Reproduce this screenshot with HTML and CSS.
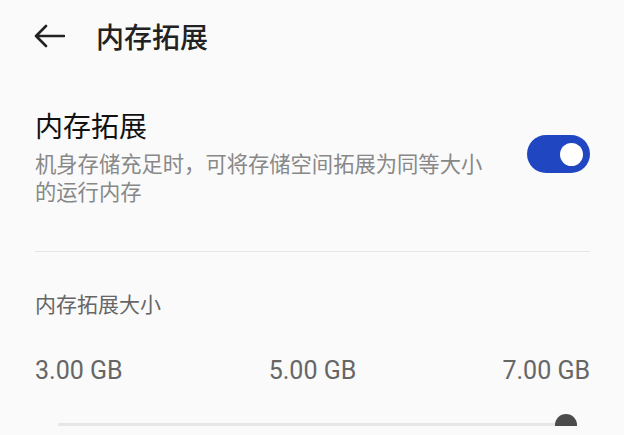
FILE: index.html
```html
<!DOCTYPE html>
<html lang="zh-CN">

<head>
    <meta charset="UTF-8">
    <meta name="viewport" content="width=device-width, initial-scale=1.0">
    <title>内存拓展</title>
    <link rel="stylesheet" href="styles.css">
</head>

<body>
    <div class="page">
        <div class="top-bar">
            <svg class="back" width="32" height="24" viewBox="0 0 32 24">
                <path d="M31 12H3M13 2L3 12l10 10" fill="none" stroke="#222" stroke-width="2.6" stroke-linecap="round" stroke-linejoin="round" />
            </svg>
            <span class="top-title">内存拓展</span>
        </div>

        <div class="switch-row">
            <div class="switch-text">
                <div class="switch-title">内存拓展</div>
                <div class="switch-desc">机身存储充足时，可将存储空间拓展为同等大小的运行内存</div>
            </div>
            <span class="toggle on"><span class="knob"></span></span>
        </div>

        <div class="divider"></div>

        <div class="size-label">内存拓展大小</div>
        <div class="size-values">
            <span>3.00 GB</span>
            <span>5.00 GB</span>
            <span>7.00 GB</span>
        </div>
        <div class="slider">
            <span class="thumb"></span>
        </div>
    </div>
</body>

</html>
```

FILE: styles.css
```css
html,
body {
    margin: 0;
    padding: 0;
    background: #fafafa;
}

body {
    font-family: Roboto, "Noto Sans CJK SC", sans-serif;
    overflow: hidden;
}

.page {
    padding: 0 34px 0 35px;
}

.top-bar {
    display: flex;
    align-items: center;
    height: 72px;
    margin-left: -2px;
}

.top-bar .back {
    display: block;
}

.top-title {
    margin-left: 31px;
    font-family: "Noto Sans CJK SC", sans-serif;
    font-size: 28px;
    font-weight: 500;
    color: #222;
}

.switch-row {
    display: flex;
    align-items: center;
    justify-content: space-between;
    padding-top: 33px;
}

.switch-text {
    width: 460px;
    font-family: "Noto Sans CJK SC", sans-serif;
}

.switch-title {
    font-size: 28px;
    line-height: 40px;
    color: #111;
}

.switch-desc {
    margin-top: 4px;
    font-size: 21.3px;
    line-height: 28px;
    color: #888;
}

.toggle {
    position: relative;
    display: block;
    width: 63px;
    height: 38px;
    margin-top: -2px;
    border-radius: 19px;
    background: #c8c8c8;
}

.toggle.on {
    background: #2146c2;
}

.toggle .knob {
    position: absolute;
    top: 7.5px;
    right: 7px;
    width: 23px;
    height: 23px;
    border-radius: 50%;
    background: #fff;
}

.divider {
    height: 1px;
    margin-top: 46px;
    background: #e6e6e6;
}

.size-label {
    margin-top: 37px;
    font-family: "Noto Sans CJK SC", sans-serif;
    font-size: 21px;
    line-height: 28px;
    color: #666;
}

.size-values {
    display: flex;
    justify-content: space-between;
    margin-top: 39px;
    font-size: 25px;
    line-height: 30px;
    color: #666;
}

.slider {
    position: relative;
    height: 3px;
    margin: 37px 24px 0 23px;
    background: #e6e6e6;
    border-radius: 2px;
}

.slider .thumb {
    position: absolute;
    right: -11px;
    top: -9.5px;
    width: 22px;
    height: 22px;
    border-radius: 50%;
    background: #4b4b4b;
}
```
